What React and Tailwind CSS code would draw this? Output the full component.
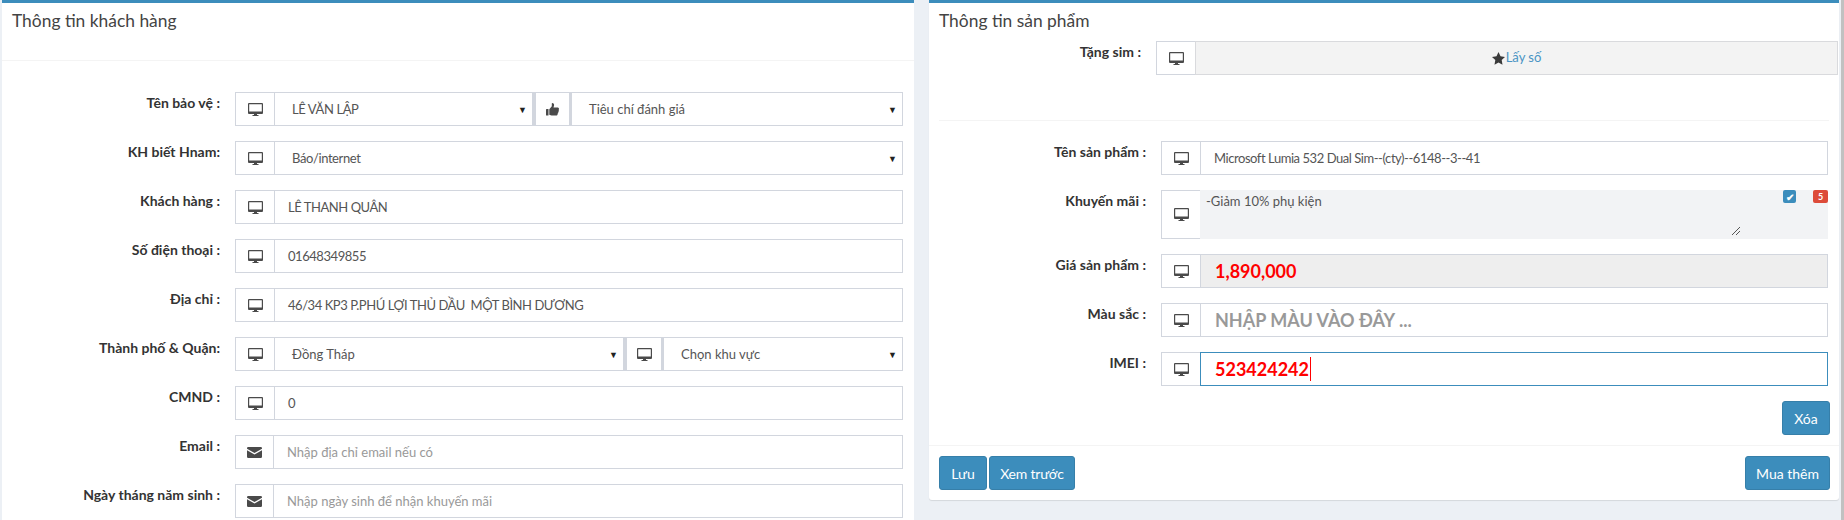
import React from 'react'

const font = 'font-["Lato","Noto_Sans",sans-serif]'

const IconDesktop = () => (
  <svg width="15" height="13" viewBox="0 0 15 13" fill="currentColor">
    <path fillRule="evenodd" d="M1 0h13a1 1 0 011 1v9a1 1 0 01-1 1H9v1h1.500v1h-6v-1H6v-1H1a1 1 0 01-1-1V1a1 1 0 011-1zm.2 1.200V8.500h12.600V1.200z" />
  </svg>
)

const IconEnvelope = () => (
  <svg width="15" height="11" viewBox="0 0 15 11" fill="currentColor">
    <path d="M1.200 0h12.600A1.200 1.200 0 0115 1.200v.6L7.500 6 0 1.800v-.6A1.200 1.200 0 011.200 0z" />
    <path d="M0 3.300L7.500 7.500 15 3.300V9.800A1.200 1.200 0 0113.800 11H1.200A1.200 1.200 0 010 9.800z" />
  </svg>
)

const IconThumb = () => (
  <svg width="13" height="13" viewBox="0 0 13 13" fill="currentColor">
    <rect x="0" y="6" width="2.500" height="6.500" rx="0.500" />
    <path d="M3.300 6.200l2.500-3V.6C5.800.2 6.100 0 6.500 0c1 0 1.600 1 1.600 2 0 .9-.4 1.700-.6 2.500h4c.8 0 1.500.6 1.500 1.400 0 .4-.2.800-.4 1 .2.300.3.600.3.900 0 .5-.3 1-.7 1.200.1.200.1.400.1.600 0 .5-.3 1-.8 1.200.1.200.1.300.1.500 0 .8-.7 1.200-1.500 1.200H6.500c-1.400 0-2.300-.5-3.200-.8z" />
  </svg>
)

const IconStar = () => (
  <svg width="13" height="13" viewBox="0 0 13 13" fill="#3a3a3a">
    <path d="M6.500 0l2 4.300 4.500.6-3.300 3.200.8 4.700-4-2.300-4 2.300.8-4.700L0 4.900l4.500-.6z" />
  </svg>
)

function Addon({ icon = 'desktop', className = 'w-[40px]' }) {
  return (
    <span className={`flex shrink-0 items-center justify-center border border-[#d2d6de] bg-white text-[#4a4a4a] ${className}`}>
      {icon === 'desktop' && <IconDesktop />}
      {icon === 'mail' && <IconEnvelope />}
      {icon === 'thumb' && <IconThumb />}
    </span>
  )
}

function Select({ value, className = 'flex-1', valueClass = '' }) {
  return (
    <div className={`-ml-px flex h-[34px] items-center justify-between border border-[#d2d6de] bg-white pl-[17px] pr-[5px] text-[13px] text-[#555] ${className}`}>
      <span className={`pt-[1px] ${valueClass}`}>{value}</span>
      <span className="text-[9px] leading-none text-[#222]">▼</span>
    </div>
  )
}

function Text({ value, placeholder }) {
  return (
    <div className={`-ml-px flex h-[34px] flex-1 items-center whitespace-pre border border-[#d2d6de] bg-white pl-[13px] pt-[1px] text-[13px] ${placeholder ? 'text-[#999]' : 'tracking-[-0.45px] text-[#555]'}`}>
      {value || placeholder}
    </div>
  )
}

function Row({ label, labelWidth, children, className = 'mb-[15px] h-[34px]' }) {
  return (
    <div className={`flex items-start ${className}`}>
      <label className={`shrink-0 pt-[1px] pr-[15px] text-right text-[14px] leading-[20px] font-bold text-[#333] ${labelWidth}`}>{label}</label>
      <div className="flex h-full flex-1 items-stretch">{children}</div>
    </div>
  )
}

function CustomerPanel() {
  const w = 'w-[233px]'
  return (
    <section className="w-[912px] border-t-[3px] border-[#3c8dbc] bg-white">
      <div className="h-[58px] border-b border-[#f4f4f4] pl-[10px] pt-[6px] text-[17.4px] leading-[24px] text-[#444]">Thông tin khách hàng</div>
      <div className="pt-[31px] pr-[11px]">
        <Row label="Tên bảo vệ :" labelWidth={w}>
          <Addon />
          <Select value="LÊ VĂN LẬP" className="w-[259px]" valueClass="tracking-[-0.4px]" />
          <Addon icon="thumb" className="w-[39px] border-x-[3px]" />
          <Select value="Tiêu chí đánh giá" className="flex-1" />
        </Row>
        <Row label="KH biết Hnam:" labelWidth={w}>
          <Addon />
          <Select value="Báo/internet" valueClass="tracking-[-0.4px]" />
        </Row>
        <Row label="Khách hàng :" labelWidth={w}>
          <Addon />
          <Text value="LÊ THANH QUÂN" />
        </Row>
        <Row label="Số điện thoại :" labelWidth={w}>
          <Addon />
          <Text value="01648349855" />
        </Row>
        <Row label="Địa chỉ :" labelWidth={w}>
          <Addon />
          <Text value="46/34 KP3 P.PHÚ LỢI THỦ DẦU  MỘT BÌNH DƯƠNG" />
        </Row>
        <Row label="Thành phố & Quận:" labelWidth={w}>
          <Addon />
          <Select value="Đồng Tháp" className="w-[350px]" />
          <Addon className="w-[40px] border-x-[3px]" />
          <Select value="Chọn khu vực" />
        </Row>
        <Row label="CMND :" labelWidth={w}>
          <Addon />
          <Text value="0" />
        </Row>
        <Row label="Email :" labelWidth={w}>
          <Addon icon="mail" className="w-[39px]" />
          <Text placeholder="Nhập địa chỉ email nếu có" />
        </Row>
        <Row label="Ngày tháng năm sinh :" labelWidth={w}>
          <Addon icon="mail" className="w-[39px]" />
          <Text placeholder="Nhập ngày sinh để nhận khuyến mãi" />
        </Row>
      </div>
    </section>
  )
}

function ProductPanel() {
  const w = 'w-[232px]'
  return (
    <section className="relative h-[500px] w-[910px] rounded-b-[3px] border-t-[3px] border-[#3c8dbc] bg-white shadow-[0_1px_1px_rgba(0,0,0,0.1)]">
      <div className="pl-[10px] pt-[6px] text-[17.4px] leading-[24px] text-[#444]">Thông tin sản phẩm</div>
      <div className="mt-[8px] mr-[1px] flex h-[34px]">
        <label className="w-[227px] shrink-0 pt-[1px] pr-[15px] text-right text-[14px] leading-[20px] font-bold text-[#333]">Tặng sim :</label>
        <Addon />
        <div className="-ml-px flex flex-1 items-center justify-center border border-[#d9dadd] bg-[#f3f3f3] text-[13px] text-[#4a94c4]">
          <IconStar /><span className="ml-[1px]">Lấy số</span>
        </div>
      </div>
      <div className="mx-[10px] mt-[45px] border-t border-[#f4f4f4]" />
      <div className="pt-[20px] pr-[11px]">
        <Row label="Tên sản phẩm :" labelWidth={w}>
          <Addon />
          <Text value="Microsoft Lumia 532 Dual Sim--(cty)--6148--3--41" />
        </Row>
        <Row label="Khuyến mãi :" labelWidth={w} className="mb-[15px] h-[49px]">
          <Addon />
          <div className="relative -ml-px flex-1 bg-[#f2f3f5] pl-[6px] pt-[2px] text-[13px] leading-[18px] text-[#555]">
            -Giảm 10% phụ kiện
            <svg className="absolute left-[532px] top-[36px]" width="9" height="9" viewBox="0 0 9 9" stroke="#555" strokeWidth="1" fill="none">
              <path d="M0 9L8 1M4 9L8 5" />
            </svg>
            <span className="absolute right-[32px] top-0 flex h-[13px] w-[13px] items-center justify-center rounded-[2px] bg-[#3c8dbc] text-[10px] font-bold text-white">✔</span>
            <span className="absolute right-0 top-0 flex h-[13px] w-[15px] items-center justify-center rounded-[2px] bg-[#dd4b39] text-[9px] font-bold text-white">5</span>
          </div>
        </Row>
        <Row label="Giá sản phẩm :" labelWidth={w}>
          <Addon />
          <div className="-ml-px flex flex-1 items-center border border-[#d2d6de] bg-[#eee] pl-[14px] text-[18px] font-bold text-[#f00]">1,890,000</div>
        </Row>
        <Row label="Màu sắc :" labelWidth={w}>
          <Addon />
          <div className="-ml-px flex flex-1 items-center border border-[#d2d6de] pl-[14px] text-[18px] font-bold text-[#999]">NHẬP MÀU VÀO ĐÂY ...</div>
        </Row>
        <Row label="IMEI :" labelWidth={w} className="h-[34px]">
          <Addon />
          <div className="-ml-px flex flex-1 items-center border border-[#3c8dbc] pl-[14px] text-[18px] font-bold text-[#f00]">
            523424242<span className="ml-px h-[24px] w-px bg-[#f00]" />
          </div>
        </Row>
      </div>
      <div className="mt-[15px] flex justify-end pr-[9px]">
        <button className="h-[34px] w-[48px] rounded-[3px] border border-[#367fa9] bg-[#3c8dbc] text-[14px] text-white">Xóa</button>
      </div>
      <div className="mt-[10px] flex items-center justify-between border-t border-[#f4f4f4] px-[10px] pt-[10px]">
        <div className="flex gap-[2px]">
          <button className="h-[34px] w-[48px] rounded-[3px] border border-[#367fa9] bg-[#3c8dbc] text-[14px] text-white">Lưu</button>
          <button className="h-[34px] w-[86px] rounded-[3px] border border-[#367fa9] bg-[#3c8dbc] text-[14px] tracking-[-0.2px] text-white">Xem trước</button>
        </div>
        <button className="mr-[-1px] h-[34px] w-[85px] rounded-[3px] border border-[#367fa9] bg-[#3c8dbc] text-[14px] text-white">Mua thêm</button>
      </div>
    </section>
  )
}

export default function App() {
  return (
    <div className={`flex h-[520px] w-[1844px] items-start overflow-hidden bg-[#ecf0f5] pl-[2px] ${font}`}>
      <CustomerPanel />
      <div className="ml-[15px]"><ProductPanel /></div>
      <div className="ml-auto h-full w-[3px] bg-[#c1c1c1]" />
    </div>
  )
}
